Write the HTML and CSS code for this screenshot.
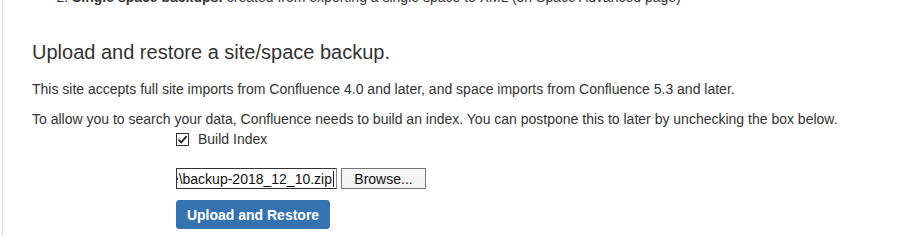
FILE: index.html
```html
<!DOCTYPE html>
<html>
<head>
<meta charset="utf-8">
<link rel="stylesheet" href="styles.css">
</head>
<body>
<div class="page">
  <ol class="types" start="2">
    <li><strong>Single space backups:</strong> created from exporting a single space to XML (on Space Advanced page)</li>
  </ol>
  <h2 class="title">Upload and restore a site/space backup.</h2>
  <p class="para">This site accepts full site imports from Confluence 4.0 and later, and space imports from Confluence 5.3 and later.</p>
  <p class="para">To allow you to search your data, Confluence needs to build an index. You can postpone this to later by unchecking the box below.</p>
  <form class="form">
    <label class="check-row">
      <span class="checkbox"><svg width="11" height="11" viewBox="0 0 11 11"><path d="M1.5 5.5 L4.2 8.3 L9.6 2.2" fill="none" stroke="#222" stroke-width="1.8"/></svg></span>
      <span>Build Index</span>
    </label>
    <div class="file-row">
      <div class="file-text"><span class="file-name">C:\Confluence-Home\backup-2018_12_10.zip</span><span class="caret"></span></div>
      <div class="browse">Browse...</div>
    </div>
    <div class="btn-row">
      <button type="button" class="primary">Upload and Restore</button>
    </div>
  </form>
</div>
</body>
</html>
```

FILE: styles.css
```css
html, body {
  margin: 0;
  padding: 0;
  background: #fff;
}
body {
  font-family: Arial, "Liberation Sans", sans-serif;
  font-size: 14px;
  line-height: 20px;
  color: #333;
  overflow: hidden;
}
.page {
  margin-left: 2px;
  border-left: 1px solid #e4e4e4;
  padding-left: 29px;
  height: 249px;
  box-sizing: border-box;
}
.types {
  margin: -13px 0 0 0;
  padding-left: 40px;
}
.types strong {
  font-weight: bold;
}
.title {
  margin: 33px 0 0 0;
  font-size: 20px;
  line-height: 24px;
  font-weight: normal;
  color: #333;
}
.para {
  margin: 15px 0 0 0;
}
.para + .para {
  margin-top: 10px;
}
.form {
  padding-left: 144px;
  margin: 0;
}
.check-row {
  display: flex;
  align-items: center;
  gap: 9px;
  height: 20px;
  margin-top: 0;
}
.checkbox {
  width: 11px;
  height: 11px;
  border: 1px solid #333;
  background: #fff;
  display: inline-flex;
}
.file-row {
  display: flex;
  align-items: stretch;
  gap: 4px;
  margin-top: 19px;
  height: 21px;
}
.file-text {
  width: 157px;
  border: 1px solid #333;
  border-right-color: #888;
  background: #fff;
  display: flex;
  justify-content: flex-end;
  align-items: center;
  overflow: hidden;
  white-space: nowrap;
  color: #111;
  font-size: 14px;
  padding-right: 2px;
}
.caret {
  width: 1px;
  height: 16px;
  background: #111;
  margin-left: 1px;
  flex: none;
}
.file-name {
  flex: none;
}
.browse {
  width: 83px;
  border: 1px solid #777;
  background: #f4f4f4;
  color: #111;
  display: flex;
  align-items: center;
  justify-content: center;
}
.btn-row {
  margin-top: 11px;
}
.primary {
  font-family: Arial, "Liberation Sans", sans-serif;
  font-size: 14px;
  font-weight: bold;
  color: #fff;
  background: #3572b0;
  border: 1px solid #3572b0;
  border-radius: 3px;
  height: 29px;
  width: 154px;
  padding: 0;
  white-space: nowrap;
}
```
